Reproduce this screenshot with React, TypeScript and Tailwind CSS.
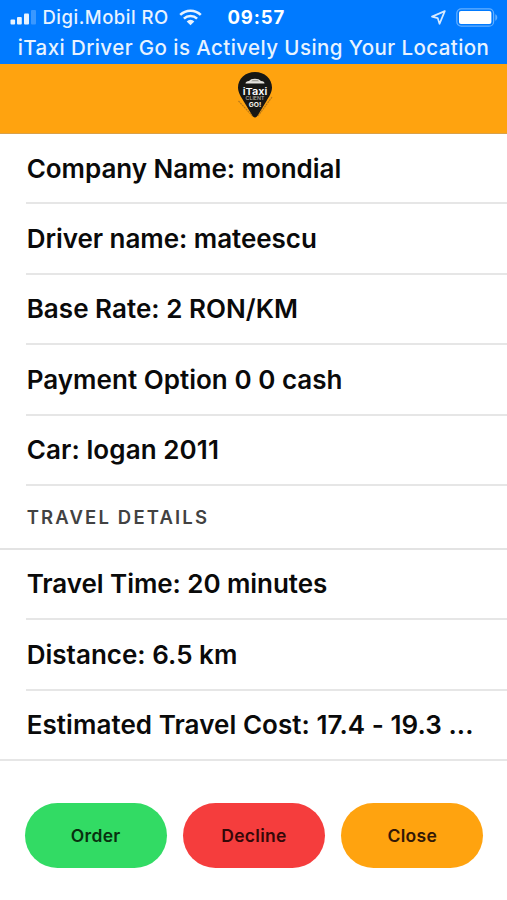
import clsx from 'clsx'

interface Row {
  text: string
  tracking: string
}

interface Action {
  label: string
  color: string
}

const driverRows: Row[] = [
  { text: 'Company Name: mondial', tracking: 'tracking-[-0.04px]' },
  { text: 'Driver name: mateescu', tracking: 'tracking-[-0.04px]' },
  { text: 'Base Rate: 2 RON/KM', tracking: 'tracking-[0.03px]' },
  { text: 'Payment Option 0 0 cash', tracking: 'tracking-[0.03px]' },
  { text: 'Car: logan 2011', tracking: 'tracking-[0.1px]' },
]

const travelRows: Row[] = [
  { text: 'Travel Time: 20 minutes', tracking: 'tracking-[-0.06px]' },
  { text: 'Distance: 6.5 km', tracking: 'tracking-[0.02px]' },
  { text: 'Estimated Travel Cost: 17.4 - 19.3 ...', tracking: 'tracking-[0.06px]' },
]

const actions: Action[] = [
  { label: 'Order', color: 'bg-[#32db64] text-[#08300f]' },
  { label: 'Decline', color: 'bg-[#f53d3d] text-[#350808]' },
  { label: 'Close', color: 'bg-[#ffa30f] text-[#331806]' },
]

/* ── Icons ──────────────────────────────────────────────────────── */

function SignalIcon() {
  return (
    <svg width="27" height="16" viewBox="0 0 27 16" fill="#e8f3ff">
      <rect x="0.5" y="10.5" width="4.6" height="5" rx="1" />
      <rect x="7" y="8" width="4.8" height="7.5" rx="1" />
      <rect x="14" y="4.5" width="5" height="11" rx="1" />
      <rect x="21" y="1" width="5" height="14.5" rx="1" opacity="0.25" />
    </svg>
  )
}

function WifiIcon() {
  return (
    <svg width="23" height="17" viewBox="0 0 23 17" fill="none" stroke="#e8f3ff" strokeWidth="2.5">
      <path d="M1.2 5.9a14.6 14.6 0 0 1 20.6 0" />
      <path d="M4.9 9.6a9.4 9.4 0 0 1 13.2 0" />
      <path d="M11.5 16.2 7.7 12.4a5.4 5.4 0 0 1 7.6 0z" fill="#e8f3ff" stroke="none" />
    </svg>
  )
}

function LocationIcon() {
  return (
    <svg width="15" height="15" viewBox="0 0 15 15" fill="none" stroke="#d5e9ff" strokeWidth="1.7" strokeLinejoin="round">
      <path d="M13.8 1.1 1 6.6 6.7 8.1 8.5 13.8z" />
    </svg>
  )
}

function BatteryIcon() {
  return (
    <svg width="42" height="19" viewBox="0 0 42 19">
      <rect x="0.8" y="0.8" width="36.8" height="17.4" rx="4.5" fill="none" stroke="#65b0ff" strokeWidth="1.2" />
      <rect x="3" y="3" width="32.4" height="13" rx="2" fill="#fff" />
      <path d="M39.3 6.3c2.6 1 2.6 5.4 0 6.4z" fill="#65b0ff" />
    </svg>
  )
}

function Logo() {
  return (
    <svg width="38" height="48" viewBox="0 0 38 48">
      <path d="m2.5 30 15 16M36 26l-14 19" fill="none" stroke="#b8791a" strokeWidth="1.2" strokeDasharray="2 0.7" />
      <path d="M19 1C9.4 1 2 7.8 2 16.6c0 5 3 9.2 5.5 13.4l8.5 14c.9 1.5 1.7 2.4 3 2.4s2.1-.9 3-2.4l8.5-14c2.500-4.200 5.500-8.400 5.500-13.400C36 7.800 28.600 1 19 1z" fill="#181714" />
      <path d="M9.500 12.500c0-1.800 1.600-2.200 3.500-2.500l2.200-1.700c2-.9 5.500-.9 7.400 0l2.400 1.700c2.400.3 3.500.8 3.500 2.500z" fill="#e3e1dc" />
      <path d="M15 10.200l1.700-1h5l1.700 1z" fill="#8a877f" />
      <g fontFamily="Inter, sans-serif" textAnchor="middle">
        <text x="19" y="23.5" fontSize="9.5" fontWeight="600" fill="#fff" textLength="24.5" lengthAdjust="spacingAndGlyphs">iTaxi</text>
        <text x="19" y="29.2" fontSize="5" fontWeight="500" fill="#b5b1a9" textLength="19" lengthAdjust="spacingAndGlyphs">CLIENT</text>
        <text x="19" y="36" fontSize="6.5" fontWeight="700" fill="#f4f1eb" textLength="12.5" lengthAdjust="spacingAndGlyphs">GO!</text>
      </g>
    </svg>
  )
}

/* ── Page sections ──────────────────────────────────────────────── */

function StatusBar() {
  return (
    <div className="h-16 bg-[#007aff] text-[#e8f3ff]">
      <div className="flex h-[34px] items-center pl-[9.5px] pr-[9px]">
        <SignalIcon />
        <span className="ml-1.5 mt-px w-[127px] whitespace-nowrap text-[18.5px] font-medium tracking-[0.5px]">Digi.Mobil RO</span>
        <span className="ml-[9px]">
          <WifiIcon />
        </span>
        <span className="ml-[26px] mt-px whitespace-nowrap text-[18.5px] font-bold tracking-[0.9px] text-white">09:57</span>
        <span className="ml-auto">
          <LocationIcon />
        </span>
        <span className="ml-[10px]">
          <BatteryIcon />
        </span>
      </div>
      <div className="flex h-[28px] items-center justify-center whitespace-nowrap text-[20.5px] font-medium tracking-[0.42px]">
        iTaxi Driver Go is Actively Using Your Location
      </div>
    </div>
  )
}

function InfoRow({ row, full }: { row: Row; full?: boolean }) {
  return (
    <div className={clsx('h-[70.4px] pl-[26px]', full && 'border-b-2 border-[#e6e6e6]')}>
      <div
        className={clsx(
          'flex h-full items-center whitespace-nowrap pl-[0.7px] text-[26px] font-semibold text-[#0a0a0a]',
          row.tracking,
          !full && 'border-b-2 border-[#e6e6e6]'
        )}
      >
        {row.text}
      </div>
    </div>
  )
}

export default function App() {
  return (
    <div className="h-[900px] w-[507px] overflow-hidden bg-white font-['Inter',sans-serif]">
      <StatusBar />
      <header className="flex h-[70px] justify-center border-b border-[#d9a14a] bg-[#ffa30f] pt-[7px] pl-[2px]">
        <Logo />
      </header>
      <main>
        {driverRows.map((row) => (
          <InfoRow key={row.text} row={row} />
        ))}
        <h2 className="flex h-[63.8px] items-center border-b-2 border-[#e3e3e3] pl-[26.7px] pt-[2px] text-[18.5px] font-semibold tracking-[2.15px] text-[#424242]">
          TRAVEL DETAILS
        </h2>
        {travelRows.map((row, i) => (
          <InfoRow key={row.text} row={row} full={i === travelRows.length - 1} />
        ))}
      </main>
      <footer className="mt-[42.4px] flex gap-4 pl-[24.5px] pr-[23.5px]">
        {actions.map((action) => (
          <button
            key={action.label}
            className={clsx('h-[65px] flex-1 rounded-full text-[17.5px] font-semibold tracking-[0.3px]', action.color)}
          >
            {action.label}
          </button>
        ))}
      </footer>
    </div>
  )
}
